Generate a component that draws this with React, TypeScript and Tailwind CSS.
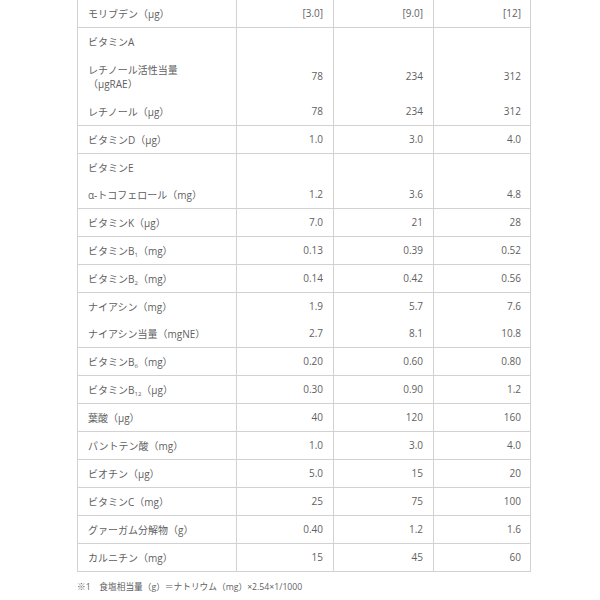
import React from "react";

type Item = { label: React.ReactNode; values?: [string, string, string]; tall?: boolean };
type Row = Item[];

const B = (n: string) => (
  <>
    ビタミンB<sub className="text-[6px] align-baseline relative top-[2px]">{n}</sub>
  </>
);

const rows: Row[] = [
  [{ label: "モリブデン（μg）", values: ["[3.0]", "[9.0]", "[12]"] }],
  [
    { label: "ビタミンA" },
    {
      label: (
        <>
          レチノール活性当量
          <br />
          （μgRAE）
        </>
      ),
      values: ["78", "234", "312"],
      tall: true,
    },
    { label: "レチノール（μg）", values: ["78", "234", "312"] },
  ],
  [{ label: "ビタミンD（μg）", values: ["1.0", "3.0", "4.0"] }],
  [
    { label: "ビタミンE" },
    { label: "α-トコフェロール（mg）", values: ["1.2", "3.6", "4.8"] },
  ],
  [{ label: "ビタミンK（μg）", values: ["7.0", "21", "28"] }],
  [{ label: <>{B("1")}（mg）</>, values: ["0.13", "0.39", "0.52"] }],
  [{ label: <>{B("2")}（mg）</>, values: ["0.14", "0.42", "0.56"] }],
  [
    { label: "ナイアシン（mg）", values: ["1.9", "5.7", "7.6"] },
    { label: "ナイアシン当量（mgNE）", values: ["2.7", "8.1", "10.8"] },
  ],
  [{ label: <>{B("6")}（mg）</>, values: ["0.20", "0.60", "0.80"] }],
  [{ label: <>{B("12")}（μg）</>, values: ["0.30", "0.90", "1.2"] }],
  [{ label: "葉酸（μg）", values: ["40", "120", "160"] }],
  [{ label: "パントテン酸（mg）", values: ["1.0", "3.0", "4.0"] }],
  [{ label: "ビオチン（μg）", values: ["5.0", "15", "20"] }],
  [{ label: "ビタミンC（mg）", values: ["25", "75", "100"] }],
  [{ label: "グァーガム分解物（g）", values: ["0.40", "1.2", "1.6"] }],
  [{ label: "カルニチン（mg）", values: ["15", "45", "60"] }],
];

const colW = ["w-[158px]", "w-[97px]", "w-[100px]", "w-[98px]"];

export default function App() {
  return (
    <div
      className="w-[600px] h-[600px] bg-white overflow-hidden pl-[77px] text-[#5f5f5f] text-[10px]"
      style={{ fontFamily: '"Open Sans", "Noto Sans CJK JP", sans-serif' }}
    >
      <div className="w-[454px] border-x border-b border-[#d2d2d2]">
        {rows.map((row, ri) => (
          <div
            key={ri}
            className={`flex ${ri > 0 ? "border-t border-[#d2d2d2]" : ""}`}
          >
            <div className={`${colW[0]} shrink-0 flex flex-col pl-[10px]`}>
              {row.map((it, ii) => (
                <div
                  key={ii}
                  className={`flex items-center leading-[14px] ${it.tall ? "h-[43px]" : "h-[27px]"}`}
                >
                  <span>{it.label}</span>
                </div>
              ))}
            </div>
            {[0, 1, 2].map((ci) => (
              <div
                key={ci}
                className={`${colW[ci + 1]} shrink-0 flex flex-col border-l border-[#d2d2d2] pr-[10px]`}
              >
                {row.map((it, ii) => (
                  <div
                    key={ii}
                    className={`flex items-center justify-end ${it.tall ? "h-[43px]" : "h-[27px]"}`}
                  >
                    {it.values ? it.values[ci] : ""}
                  </div>
                ))}
              </div>
            ))}
          </div>
        ))}
      </div>
      <div className="mt-[8px] text-[8.7px] leading-[14px]">
        ※1　食塩相当量（g）＝ナトリウム（mg）×2.54×1/1000
      </div>
    </div>
  );
}
